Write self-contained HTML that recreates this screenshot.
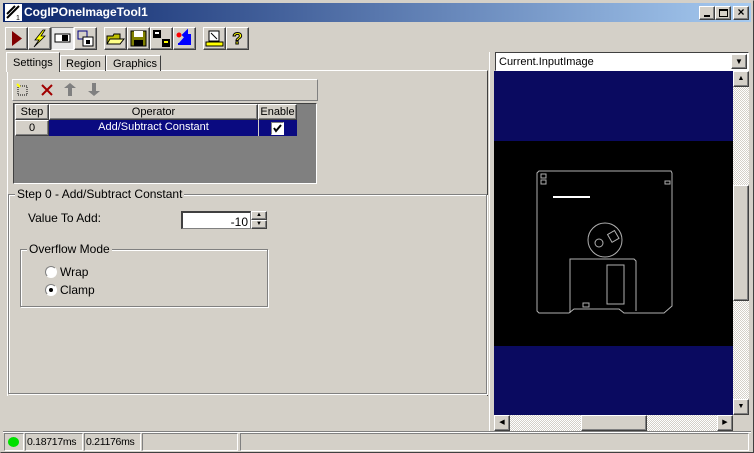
<!DOCTYPE html>
<html><head><meta charset="utf-8"><style>
*{box-sizing:border-box}
body{margin:0;width:754px;height:453px;background:#d4d0c8;font-family:"Liberation Sans",Arial,sans-serif;font-size:11px;position:relative;overflow:hidden;color:#000}
.a{position:absolute}
.raised{background:#d4d0c8;border-top:1px solid #fff;border-left:1px solid #fff;border-right:1px solid #404040;border-bottom:1px solid #404040;box-shadow:inset -1px -1px 0 #808080}
.sunk{border-top:1px solid #808080;border-left:1px solid #808080;border-right:1px solid #fff;border-bottom:1px solid #fff}
.etch{border:1px solid #808080;box-shadow:1px 1px 0 #fff,inset 1px 1px 0 #fff}
.btn{position:absolute;top:27px;width:23px;height:23px}
.cell{position:absolute;text-align:center;line-height:15px}
</style></head><body>
<div class="a" style="left:0;top:0;width:754px;height:453px;border:1px solid #404040;border-top-color:#d4d0c8;border-left-color:#d4d0c8"></div>
<div class="a" style="left:3px;top:3px;width:748px;height:19px;background:linear-gradient(90deg,#0a246a,#a6caf0)"></div>
<svg class="a" style="left:5px;top:4px" width="17" height="17"><rect width="17" height="17" fill="#fff"/><path d="M2 14 L14 2 M2 10 L10 2" stroke="#000" stroke-width="2"/><text x="11" y="16" font-size="7" fill="#000">1</text></svg>
<div class="a" style="left:24px;top:4px;color:#fff;font-weight:bold;font-size:12px;line-height:17px">CogIPOneImageTool1</div>
<div class="a raised" style="left:699px;top:6px;width:16px;height:14px"><div class="a" style="left:4px;top:8px;width:6px;height:2px;background:#000"></div></div>
<div class="a raised" style="left:715px;top:6px;width:16px;height:14px"><div class="a" style="left:3px;top:2px;width:9px;height:8px;border:1px solid #000;border-top-width:2px"></div></div>
<div class="a raised" style="left:733px;top:6px;width:16px;height:14px;font-weight:bold;font-size:12px;line-height:11px;text-align:center">×</div>
<div class="btn raised" style="left:5px"><svg width="21" height="21"><path d="M6 3 L16 10.5 L6 18Z" fill="#800000"/></svg></div>
<div class="btn raised" style="left:28px"><svg width="21" height="21"><path d="M14 2 L6 12 L10 12 L5 19 L16 8 L12 8 L16 2Z" fill="#ff0" stroke="#000" stroke-width=".8"/></svg></div>
<div class="btn sunk" style="left:51px;background:#e8e8e8"><svg width="21" height="21"><rect x="3" y="6" width="15" height="8" fill="#fff" stroke="#000"/><rect x="10" y="7" width="6" height="6" fill="#000"/></svg></div>
<div class="btn raised" style="left:74px"><svg width="21" height="21"><rect x="3" y="3" width="9" height="8" fill="none" stroke="#000080"/><rect x="8" y="9" width="10" height="9" fill="#fff" stroke="#000"/><rect x="11" y="12" width="4" height="4" fill="#000"/></svg></div>
<div class="btn raised" style="left:104px"><svg width="21" height="21"><path d="M2 8 L8 8 L9 6 L15 6 L15 16 L2 16Z" fill="#c0c000" stroke="#000"/><path d="M5 11 L19 11 L15 16 L2 16Z" fill="#ff8" stroke="#000"/></svg></div>
<div class="btn raised" style="left:127px"><svg width="21" height="21"><rect x="3" y="3" width="15" height="15" fill="#808000" stroke="#000"/><rect x="6" y="3" width="9" height="6" fill="#fff"/><rect x="6" y="12" width="9" height="6" fill="#000"/></svg></div>
<div class="btn raised" style="left:150px"><svg width="21" height="21"><rect x="2" y="2" width="8" height="8" fill="#000"/><rect x="11" y="11" width="8" height="8" fill="#000"/><rect x="4" y="4" width="4" height="2" fill="#fff"/><rect x="13" y="13" width="4" height="2" fill="#ff0"/></svg></div>
<div class="btn raised" style="left:173px"><svg width="21" height="21"><circle cx="5" cy="7" r="2.5" fill="#f00"/><path d="M9 7 L13 3 L13 11Z M12 7 L16 7 L16 16 L4 16" fill="#00f" stroke="#00f" stroke-width="2"/></svg></div>
<div class="btn raised" style="left:203px"><svg width="21" height="21"><path d="M5 3 L15 3 L15 13 L5 13Z" fill="#fff" stroke="#000"/><path d="M7 5 L13 11" stroke="#000"/><rect x="2" y="14" width="17" height="4" fill="#ff0" stroke="#000"/></svg></div>
<div class="btn raised" style="left:226px;font-weight:bold;font-size:17px;text-align:center;line-height:21px;color:#ff0;-webkit-text-stroke:1px #000">?</div>
<div class="a" style="left:7px;top:70px;width:481px;height:326px;border-top:1px solid #fff;border-left:1px solid #fff;border-right:1px solid #404040"></div>
<div class="a" style="left:6px;top:52px;width:54px;height:20px;background:#d4d0c8;border:1px solid #fff;border-right-color:#404040;border-bottom:none;padding:4px 0 0 6px">Settings</div>
<div class="a" style="left:60px;top:55px;width:46px;height:16px;border:1px solid #fff;border-right-color:#404040;border-bottom:none;padding:2px 0 0 5px">Region</div>
<div class="a" style="left:106px;top:55px;width:55px;height:16px;border:1px solid #fff;border-right-color:#404040;border-bottom:none;padding:2px 0 0 6px">Graphics</div>
<div class="a" style="left:12px;top:79px;width:306px;height:22px;border:1px solid #fff;border-right-color:#808080;border-bottom-color:#808080"></div>
<svg class="a" style="left:15px;top:82px" width="85" height="16"><rect x="3" y="4" width="9" height="9" fill="none" stroke="#000" stroke-dasharray="1 1"/><path d="M2 2 L5 5" stroke="#ff0" stroke-width="2"/><path d="M27 3 L37 13 M37 3 L27 13" stroke="#a00000" stroke-width="2"/><path d="M53 14 L53 6 L49 6 L55 1 L61 6 L57 6 L57 14Z" fill="#808080"/><path d="M77 1 L77 9 L73 9 L79 14 L85 9 L81 9 L81 1Z" fill="#808080"/></svg>
<div class="a" style="left:13px;top:103px;width:304px;height:81px;background:#808080;border:1px solid #404040;border-right-color:#fff;border-bottom-color:#fff"></div>
<div class="cell raised" style="left:15px;top:104px;width:34px;height:16px">Step</div>
<div class="cell raised" style="left:49px;top:104px;width:209px;height:16px">Operator</div>
<div class="cell raised" style="left:258px;top:104px;width:39px;height:16px">Enable</div>
<div class="cell raised" style="left:15px;top:120px;width:34px;height:16px">0</div>
<div class="cell" style="left:49px;top:120px;width:209px;height:16px;background:#0a0a80;color:#fff">Add/Subtract Constant</div>
<div class="a" style="left:258px;top:120px;width:39px;height:16px;background:#0a0a80;border-left:1px solid #d4d0c8"></div>
<div class="a" style="left:271px;top:122px;width:13px;height:13px;background:#fff;border:1px solid #808080;border-right-color:#fff;border-bottom-color:#fff"><svg width="11" height="11" style="position:absolute;left:0;top:0"><path d="M2 5 L4 8 L9 2" stroke="#000" stroke-width="2" fill="none"/></svg></div>
<div class="a etch" style="left:8px;top:194px;width:479px;height:200px"></div>
<div class="a" style="left:15px;top:187px;background:#d4d0c8;padding:0 2px;font-size:12px">Step 0 - Add/Subtract Constant</div>
<div class="a" style="left:28px;top:211px;font-size:12px">Value To Add:</div>
<div class="a" style="left:181px;top:211px;width:70px;height:18px;background:#fff;border:1px solid #808080;border-top:2px solid #404040;border-left:2px solid #404040;text-align:right;padding:2px 2px 0 0;font-size:12px">-10</div>
<div class="a raised" style="left:251px;top:211px;width:16px;height:9px;font-size:6px;line-height:7px;text-align:center">▲</div>
<div class="a raised" style="left:251px;top:220px;width:16px;height:9px;font-size:6px;line-height:7px;text-align:center">▼</div>
<div class="a etch" style="left:20px;top:249px;width:248px;height:58px"></div>
<div class="a" style="left:27px;top:242px;background:#d4d0c8;padding:0 2px;font-size:12px">Overflow Mode</div>
<div class="a" style="left:45px;top:266px;width:12px;height:12px;border-radius:50%;background:#fff;border:1px solid #808080;border-right-color:#fff;border-bottom-color:#fff"></div>
<div class="a" style="left:60px;top:265px;font-size:12px">Wrap</div>
<div class="a" style="left:45px;top:284px;width:12px;height:12px;border-radius:50%;background:#fff;border:1px solid #808080;border-right-color:#fff;border-bottom-color:#fff"><div class="a" style="left:3px;top:3px;width:4px;height:4px;border-radius:50%;background:#000"></div></div>
<div class="a" style="left:60px;top:283px;font-size:12px">Clamp</div>
<div class="a" style="left:495px;top:52px;width:254px;height:19px;background:#fff;border:1px solid #404040;border-right-color:#fff;border-bottom-color:#fff;padding:3px 0 0 3px">Current.InputImage</div>
<div class="a raised" style="left:731px;top:54px;width:16px;height:15px;font-size:8px;text-align:center;line-height:13px">▼</div>
<div class="a" style="left:494px;top:71px;width:239px;height:70px;background:#0a0a60"></div>
<div class="a" style="left:494px;top:141px;width:239px;height:205px;background:#000"></div>
<div class="a" style="left:494px;top:346px;width:239px;height:70px;background:#0a0a60"></div>
<svg class="a" style="left:494px;top:141px" width="239" height="205" fill="none" stroke="#b0b0b0" stroke-width="1">
<path d="M45 30 L177 30 L178 32 L178 165 L170 172 L130 172 L125 168 L80 168 L75 172 L45 172 L43 170 L43 32Z"/>
<rect x="47" y="33" width="5" height="4"/><rect x="47" y="39" width="5" height="4"/><rect x="171" y="40" width="5" height="3"/>
<path d="M59 56 L96 56" stroke="#fff" stroke-width="2"/>
<circle cx="111" cy="99" r="17"/><circle cx="105" cy="102" r="4"/><rect x="115" y="91" width="8" height="9" transform="rotate(-30 119 95)"/>
<path d="M76 172 L76 118 L140 118 L142 120 L142 170"/>
<rect x="113" y="124" width="17" height="39"/><rect x="89" y="162" width="6" height="4"/>
</svg>
<div class="a" style="left:733px;top:71px;width:16px;height:344px;background:repeating-conic-gradient(#fff 0 25%,#d4d0c8 0 50%) 0 0/2px 2px"></div>
<div class="a raised" style="left:733px;top:71px;width:16px;height:16px;font-size:7px;text-align:center;line-height:14px">▲</div>
<div class="a raised" style="left:733px;top:185px;width:16px;height:116px"></div>
<div class="a raised" style="left:733px;top:399px;width:16px;height:16px;font-size:7px;text-align:center;line-height:14px">▼</div>
<div class="a" style="left:494px;top:415px;width:239px;height:16px;background:repeating-conic-gradient(#fff 0 25%,#d4d0c8 0 50%) 0 0/2px 2px"></div>
<div class="a raised" style="left:494px;top:415px;width:16px;height:16px;font-size:7px;text-align:center;line-height:14px">◀</div>
<div class="a raised" style="left:581px;top:415px;width:66px;height:16px"></div>
<div class="a raised" style="left:717px;top:415px;width:16px;height:16px;font-size:7px;text-align:center;line-height:14px">▶</div>
<div class="a" style="left:489px;top:52px;width:1px;height:380px;background:#fff"></div>
<div class="a" style="left:3px;top:431px;width:748px;height:1px;background:#808080"></div>
<div class="a" style="left:3px;top:432px;width:748px;height:1px;background:#fff"></div>
<div class="a sunk" style="left:4px;top:433px;width:20px;height:18px"><div class="a" style="left:3px;top:3px;width:11px;height:10px;border-radius:50%;background:#00e000"></div></div>
<div class="a sunk" style="left:25px;top:433px;width:58px;height:18px;font-size:10.5px;padding:2px 0 0 1px;letter-spacing:-0.3px;white-space:nowrap;overflow:hidden">0.18717ms</div>
<div class="a sunk" style="left:84px;top:433px;width:57px;height:18px;font-size:10.5px;padding:2px 0 0 1px;letter-spacing:-0.3px;white-space:nowrap;overflow:hidden">0.21176ms</div>
<div class="a sunk" style="left:142px;top:433px;width:96px;height:18px"></div>
<div class="a sunk" style="left:240px;top:433px;width:509px;height:18px"></div>
</body></html>
